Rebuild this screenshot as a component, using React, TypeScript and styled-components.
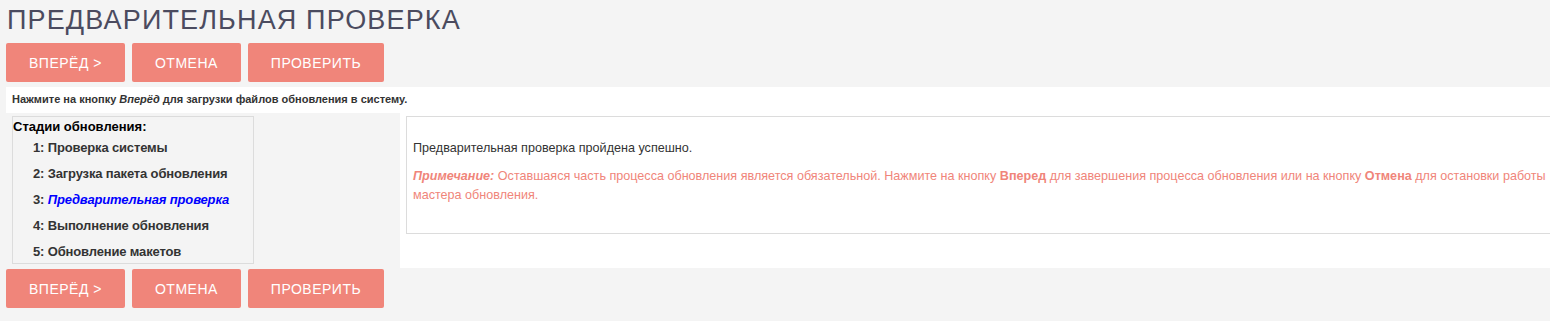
import React from 'react'
import styled, {createGlobalStyle} from 'styled-components'

const GlobalStyle = createGlobalStyle`
    html, body {
        margin: 0;
        padding: 0;
        background: #f4f4f4;
        overflow: hidden;
    }
`;

const Page = styled.div`
    padding: 0 0 0 6px;
    font-family: "Liberation Sans", Arial, sans-serif;
    color: #333;
`;

const Title = styled.h1`
    margin: 0;
    padding: 2px 0 0 1px;
    height: 41px;
    font-size: 27px;
    font-weight: 400;
    letter-spacing: 1.15px;
    color: #4b4b5f;
    line-height: 36px;
`;

const Toolbar = styled.div`
    display: flex;
    gap: 7px;
    height: 39px;
`;

const Button = styled.button`
    height: 39px;
    padding: 0 23px;
    border: none;
    border-radius: 2px;
    background: #f0857a;
    color: #fff;
    font-family: "Liberation Sans", Arial, sans-serif;
    font-size: 14px;
    letter-spacing: 0.5px;
    cursor: pointer;
`;

const Panel = styled.div`
    margin: 5px 0 1px 0;
    background: #fff;
    overflow: hidden;
`;

const Hint = styled.div`
    height: 26px;
    padding: 6px 0 0 6px;
    box-sizing: border-box;
    font-size: 11px;
    font-weight: 700;
    color: #333;
`;

const Row = styled.div`
    display: flex;
    height: 155px;
`;

const LeftCell = styled.div`
    width: 394px;
    flex: none;
    background: #f4f4f4;
    padding: 3px 0 0 6px;
    box-sizing: border-box;
`;

const Stages = styled.div`
    width: 242px;
    height: 148px;
    box-sizing: border-box;
    border: 1px solid #dcdcdc;
    padding: 2px 0 0 0;
`;

const StagesTitle = styled.div`
    font-size: 13px;
    font-weight: 700;
    color: #000;
    line-height: 16px;
`;

const Stage = styled.div<{ $active?: boolean }>`
    padding-left: 20px;
    font-size: 13px;
    font-weight: 700;
    line-height: 26px;
    letter-spacing: -0.15px;
    color: #333;

    em {
        color: ${(p) => (p.$active ? '#0000ff' : '#333')};
    }
`;

const RightCell = styled.div`
    flex: 1;
    padding: 3px 0 0 6px;
`;

const MessageBox = styled.div`
    margin-right: -20px;
    height: 118px;
    box-sizing: border-box;
    border: 1px solid #dcdcdc;
    padding: 22px 10px 0 6px;
    font-size: 12.6px;
    line-height: 19px;
`;

const Note = styled.p`
    margin: 9px 0 0 0;
    color: #f0857a;
`;

const Success = styled.p`
    margin: 0;
    color: #333;
`;

const stages = [
    '1: Проверка системы',
    '2: Загрузка пакета обновления',
    '3: ',
    '4: Выполнение обновления',
    '5: Обновление макетов',
];

function Buttons(): JSX.Element {
    return <Toolbar>
        <Button>ВПЕРЁД &gt;</Button>
        <Button>ОТМЕНА</Button>
        <Button>ПРОВЕРИТЬ</Button>
    </Toolbar>
}

export default function App(): JSX.Element {
    return <Page>
        <GlobalStyle/>
        <Title>ПРЕДВАРИТЕЛЬНАЯ ПРОВЕРКА</Title>
        <Buttons/>
        <Panel>
            <Hint>Нажмите на кнопку <i>Вперёд</i> для загрузки файлов обновления в систему.</Hint>
            <Row>
                <LeftCell>
                    <Stages>
                        <StagesTitle>Стадии обновления:</StagesTitle>
                        {stages.map((s, i) => i === 2
                            ? <Stage key={i} $active>{s}<em>Предварительная проверка</em></Stage>
                            : <Stage key={i}>{s}</Stage>)}
                    </Stages>
                </LeftCell>
                <RightCell>
                    <MessageBox>
                        <Success>Предварительная проверка пройдена успешно.</Success>
                        <Note>
                            <b><i>Примечание:</i></b> Оставшаяся часть процесса обновления является обязательной. Нажмите на
                            кнопку <b>Вперед</b> для завершения процесса обновления или на кнопку <b>Отмена</b> для остановки
                            работы мастера обновления.
                        </Note>
                    </MessageBox>
                </RightCell>
            </Row>
        </Panel>
        <Buttons/>
    </Page>
}
